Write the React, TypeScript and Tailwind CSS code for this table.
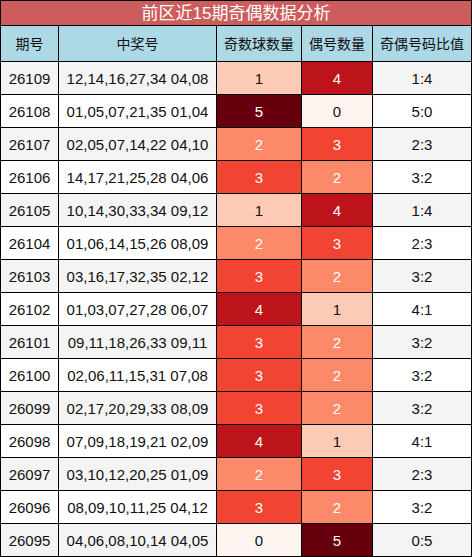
import React from "react";

type Row = [string, string, number, number, string];

const rows: Row[] = [
  ["26109", "12,14,16,27,34 04,08", 1, 4, "1:4"],
  ["26108", "01,05,07,21,35 01,04", 5, 0, "5:0"],
  ["26107", "02,05,07,14,22 04,10", 2, 3, "2:3"],
  ["26106", "14,17,21,25,28 04,06", 3, 2, "3:2"],
  ["26105", "10,14,30,33,34 09,12", 1, 4, "1:4"],
  ["26104", "01,06,14,15,26 08,09", 2, 3, "2:3"],
  ["26103", "03,16,17,32,35 02,12", 3, 2, "3:2"],
  ["26102", "01,03,07,27,28 06,07", 4, 1, "4:1"],
  ["26101", "09,11,18,26,33 09,11", 3, 2, "3:2"],
  ["26100", "02,06,11,15,31 07,08", 3, 2, "3:2"],
  ["26099", "02,17,20,29,33 08,09", 3, 2, "3:2"],
  ["26098", "07,09,18,19,21 02,09", 4, 1, "4:1"],
  ["26097", "03,10,12,20,25 01,09", 2, 3, "2:3"],
  ["26096", "08,09,10,11,25 04,12", 3, 2, "3:2"],
  ["26095", "04,06,08,10,14 04,05", 0, 5, "0:5"],
];

const heat: Record<number, string> = {
  0: "bg-[#fff5f0] text-[#111111]",
  1: "bg-[#fdcab5] text-[#111111]",
  2: "bg-[#fc8a6a] text-white",
  3: "bg-[#f14432] text-white",
  4: "bg-[#bc141a] text-white",
  5: "bg-[#67000d] text-white",
};

const headers = ["期号", "中奖号", "奇数球数量", "偶号数量", "奇偶号码比值"];

export default function App() {
  return (
    <div
      className="w-[472px] h-[557px] bg-white"
      style={{ fontFamily: '"Liberation Sans", "Noto Sans CJK SC", sans-serif' }}
    >
      <div className="grid grid-cols-[57px_157px_84px_70px_98px] grid-rows-[24px_35px_repeat(15,32px)] gap-px bg-black p-px">
        <div className="col-span-5 flex items-center justify-center bg-[#cd5c5c] text-[17px] leading-none text-white">
          前区近15期奇偶数据分析
        </div>
        {headers.map((h) => (
          <div
            key={h}
            className="flex items-center justify-center bg-[#add8e6] text-[14px] leading-none text-[#111111]"
          >
            {h}
          </div>
        ))}
        {rows.map(([issue, nums, odd, even, ratio], i) => {
          const bg = i % 2 === 0 ? "bg-[#f4f4f4]" : "bg-white";
          return (
            <React.Fragment key={issue}>
              <div className={`flex items-center justify-center ${bg} text-[15px] leading-none text-[#111111]`}>
                {issue}
              </div>
              <div className={`flex items-center justify-center ${bg} text-[15px] leading-none text-[#111111]`}>
                {nums}
              </div>
              <div className={`flex items-center justify-center ${heat[odd]} text-[15px] leading-none`}>
                {odd}
              </div>
              <div className={`flex items-center justify-center ${heat[even]} text-[15px] leading-none`}>
                {even}
              </div>
              <div className={`flex items-center justify-center ${bg} text-[15px] leading-none text-[#111111]`}>
                {ratio}
              </div>
            </React.Fragment>
          );
        })}
      </div>
    </div>
  );
}
